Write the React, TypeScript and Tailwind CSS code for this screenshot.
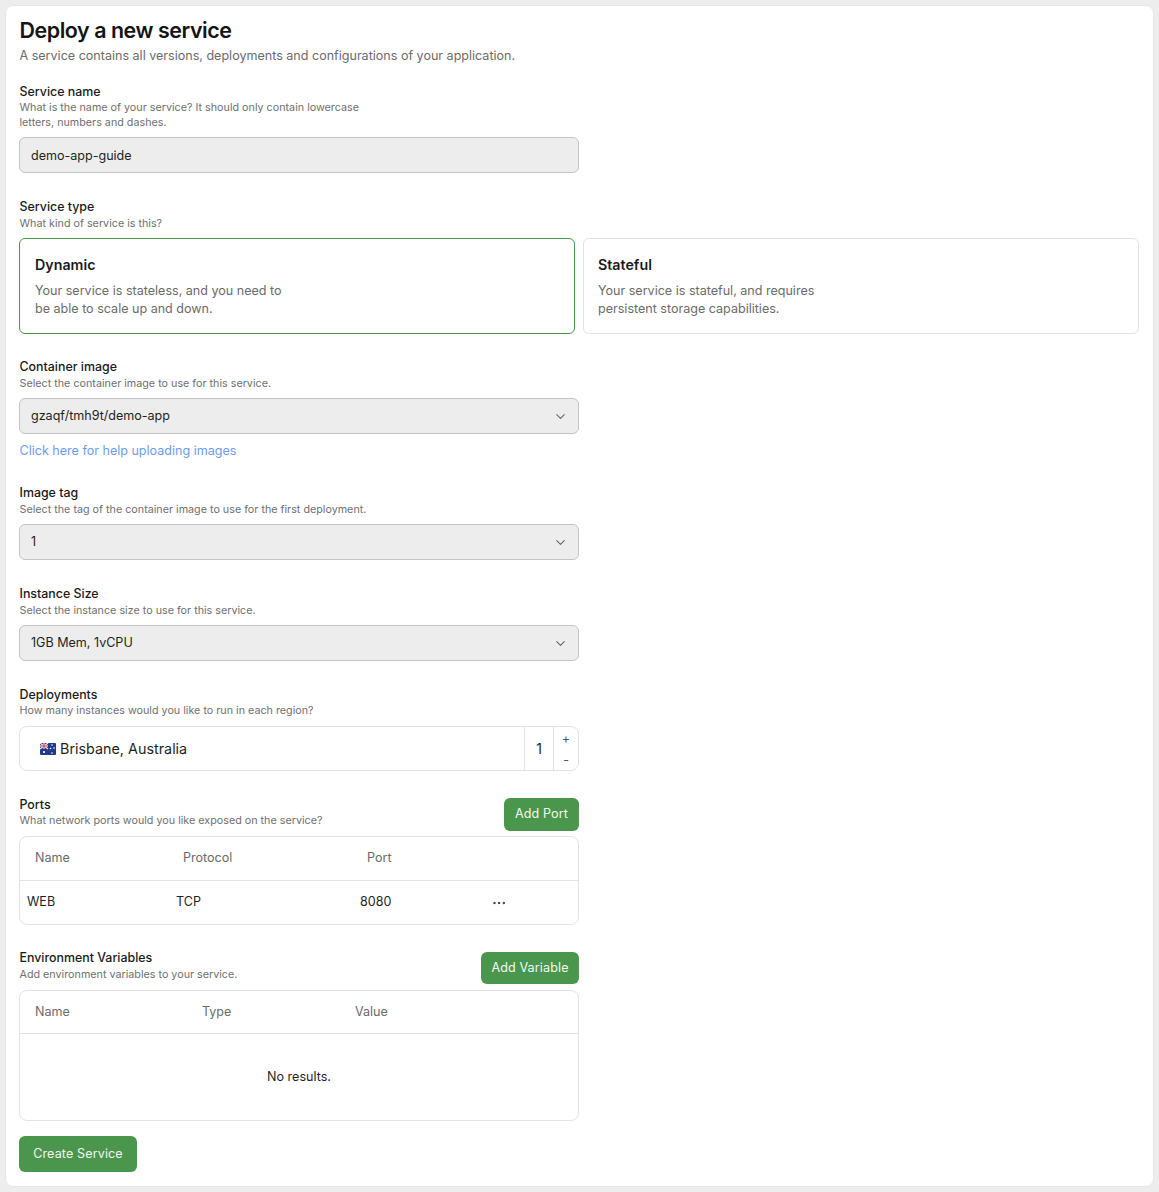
import { ChevronDown, Ellipsis } from "lucide-react";
import type { ReactNode } from "react";

function FieldHead({ label, hint, tight }: { label: string; hint: ReactNode; tight?: boolean }) {
  return (
    <div className={tight ? "pl-[0.5px]" : "mb-[-1px] pl-[0.5px]"}>
      <div className="pt-px text-[12.4px] leading-[18px] font-medium text-[#1a1a1a]">{label}</div>
      <div className={tight ? "mt-[-1px] text-[10.75px] leading-[15px] text-[#6f6f6f]" : "text-[10.75px] leading-[15px] text-[#6f6f6f]"}>
        {hint}
      </div>
    </div>
  );
}

function SelectBox({ value }: { value: string }) {
  return (
    <div className="mt-2 flex h-9 w-[560px] items-center justify-between rounded-md border border-[#c4c4c4] bg-[#ededed] pr-[10px] pl-[11px] text-[12.55px] text-[#1f1f1f]">
      <span>{value}</span>
      <ChevronDown size={15} strokeWidth={1.75} className="text-[#666666]" />
    </div>
  );
}

function TypeCard({ title, lines, active }: { title: string; lines: string[]; active?: boolean }) {
  return (
    <div
      className={
        active
          ? "h-24 rounded-md border border-[#47964a] bg-white px-[15px] pt-4"
          : "h-24 rounded-md border border-[#e3e3e3] bg-white px-[14px] pt-4"
      }
    >
      <div className="text-[14.25px] leading-5 font-semibold text-[#1a1a1a]">{title}</div>
      <div className="mt-[7px] text-[12.55px] leading-[18px] text-[#6b6b6b]">
        {lines.map((line) => (
          <div key={line}>{line}</div>
        ))}
      </div>
    </div>
  );
}

function GreenButton({ children, className }: { children: ReactNode; className: string }) {
  return (
    <button className={`flex items-center justify-center rounded-md bg-[#4a964d] text-[12.55px] tracking-[0.01em] text-[#f3f8f3] ${className}`}>
      {children}
    </button>
  );
}

function AusFlag() {
  return (
    <svg width="16" height="12" viewBox="0 0 16 12" className="shrink-0">
      <rect x="0" y="0" width="16" height="12" rx="1" fill="#1f3a8a" />
      <rect x="0" y="0" width="8" height="6" fill="#2a3f8f" />
      <path d="M0 0l8 6M8 0L0 6" stroke="#e8e8ee" strokeWidth="1.2" />
      <path d="M4 0v6M0 3h8" stroke="#e8e8ee" strokeWidth="1.8" />
      <path d="M4 0v6M0 3h8" stroke="#d0213a" strokeWidth="0.9" />
      <circle cx="4" cy="9" r="1.1" fill="#fff" />
      <circle cx="12" cy="2" r="0.8" fill="#fff" />
      <circle cx="14" cy="5" r="0.8" fill="#fff" />
      <circle cx="10.5" cy="5.5" r="0.8" fill="#fff" />
      <circle cx="12" cy="10" r="0.8" fill="#fff" />
    </svg>
  );
}

export default function App() {
  return (
    <div className="h-[1192px] bg-[#ededed] pt-[5px] pr-[5px] pl-[5px] font-['Inter',sans-serif]">
      <div className="h-[1182px] rounded-lg border border-[#e6e6e6] bg-white pt-[10px] pr-[13px] pl-[13px]">
        <h1 className="pl-[0.5px] text-[21.4px] leading-[28px] font-semibold tracking-[-0.02em] text-[#141414]">Deploy a new service</h1>
        <p className="mt-[2px] pl-[0.5px] text-[12.55px] leading-[20px] text-[#6b6b6b]">
          A service contains all versions, deployments and configurations of your application.
        </p>

        <div className="mt-4">
          <FieldHead
            tight
            label="Service name"
            hint={
              <>
                What is the name of your service? It should only contain lowercase
                <br />
                letters, numbers and dashes.
              </>
            }
          />
          <div className="mt-[7px] flex h-9 w-[560px] items-center rounded-md border border-[#c4c4c4] bg-[#ededed] pt-[2px] pl-[11px] text-[12.55px] text-[#1f1f1f]">
            demo-app-guide
          </div>
        </div>

        <div className="mt-6">
          <FieldHead label="Service type" hint="What kind of service is this?" />
          <div className="mt-2 grid w-[1120px] grid-cols-2 gap-2">
            <TypeCard active title="Dynamic" lines={["Your service is stateless, and you need to", "be able to scale up and down."]} />
            <TypeCard title="Stateful" lines={["Your service is stateful, and requires", "persistent storage capabilities."]} />
          </div>
        </div>

        <div className="mt-[23px]">
          <FieldHead label="Container image" hint="Select the container image to use for this service." />
          <SelectBox value="gzaqf/tmh9t/demo-app" />
          <div className="mt-2 pl-[0.5px] text-[12.55px] leading-[18px] text-[#6c9cf0]">Click here for help uploading images</div>
        </div>

        <div className="mt-[23px]">
          <FieldHead label="Image tag" hint="Select the tag of the container image to use for the first deployment." />
          <SelectBox value="1" />
        </div>

        <div className="mt-6">
          <FieldHead label="Instance Size" hint="Select the instance size to use for this service." />
          <SelectBox value="1GB Mem, 1vCPU" />
        </div>

        <div className="mt-6">
          <FieldHead tight label="Deployments" hint="How many instances would you like to run in each region?" />
          <div className="mt-2 flex h-[45px] w-[560px] items-stretch rounded-lg border border-[#e3e3e3]">
            <div className="flex flex-1 items-center gap-1 pl-5 text-[14.35px] text-[#1f1f1f]">
              <AusFlag />
              Brisbane, Australia
            </div>
            <div className="flex w-[29px] items-center justify-center border-l border-[#e3e3e3] text-sm text-[#1f1f1f]">1</div>
            <div className="flex w-[25px] flex-col items-center justify-between border-l border-[#e3e3e3] pt-1 pb-[2px] text-[12.5px] leading-4 text-[#555555]">
              <span>+</span>
              <span>-</span>
            </div>
          </div>
        </div>

        <div className="mt-[27px] flex w-[560px] items-start justify-between">
          <div className="mt-[-3px]">
            <FieldHead tight label="Ports" hint="What network ports would you like exposed on the service?" />
          </div>
          <GreenButton className="h-[33px] w-[75px]">Add Port</GreenButton>
        </div>

        <div className="mt-[5px] w-[560px] rounded-lg border border-[#e3e3e3] text-[12.55px]">
          <div className="grid h-[44px] grid-cols-[148px_184px_132px_1fr] items-center border-b border-[#e3e3e3] text-[#6b6b6b]">
            <span className="pl-[15px]">Name</span>
            <span className="pl-[15px]">Protocol</span>
            <span className="pl-[15px]">Port</span>
          </div>
          <div className="grid h-[43px] grid-cols-[148px_184px_132px_1fr] items-center text-[#1f1f1f]">
            <span className="pl-[7px]">WEB</span>
            <span className="pl-2">TCP</span>
            <span className="pl-2">8080</span>
            <Ellipsis size={16} strokeWidth={1.5} className="ml-[7px] text-[#1f1f1f]" />
          </div>
        </div>

        <div className="mt-[27px] flex w-[560px] items-start justify-between">
          <div className="mt-[-4px]">
            <FieldHead label="Environment Variables" hint="Add environment variables to your service." />
          </div>
          <GreenButton className="h-8 w-[98px]">Add Variable</GreenButton>
        </div>

        <div className="mt-[6px] w-[560px] rounded-lg border border-[#e3e3e3] text-[12.55px]">
          <div className="grid h-[43px] grid-cols-[167px_153px_1fr] items-center border-b border-[#e3e3e3] text-[#6b6b6b]">
            <span className="pl-[15px]">Name</span>
            <span className="pl-[15px]">Type</span>
            <span className="pl-[15px]">Value</span>
          </div>
          <div className="flex h-[86px] items-center justify-center text-[#1f1f1f]">No results.</div>
        </div>

        <GreenButton className="mt-[15px] h-9 w-[118px]">Create Service</GreenButton>
      </div>
    </div>
  );
}
